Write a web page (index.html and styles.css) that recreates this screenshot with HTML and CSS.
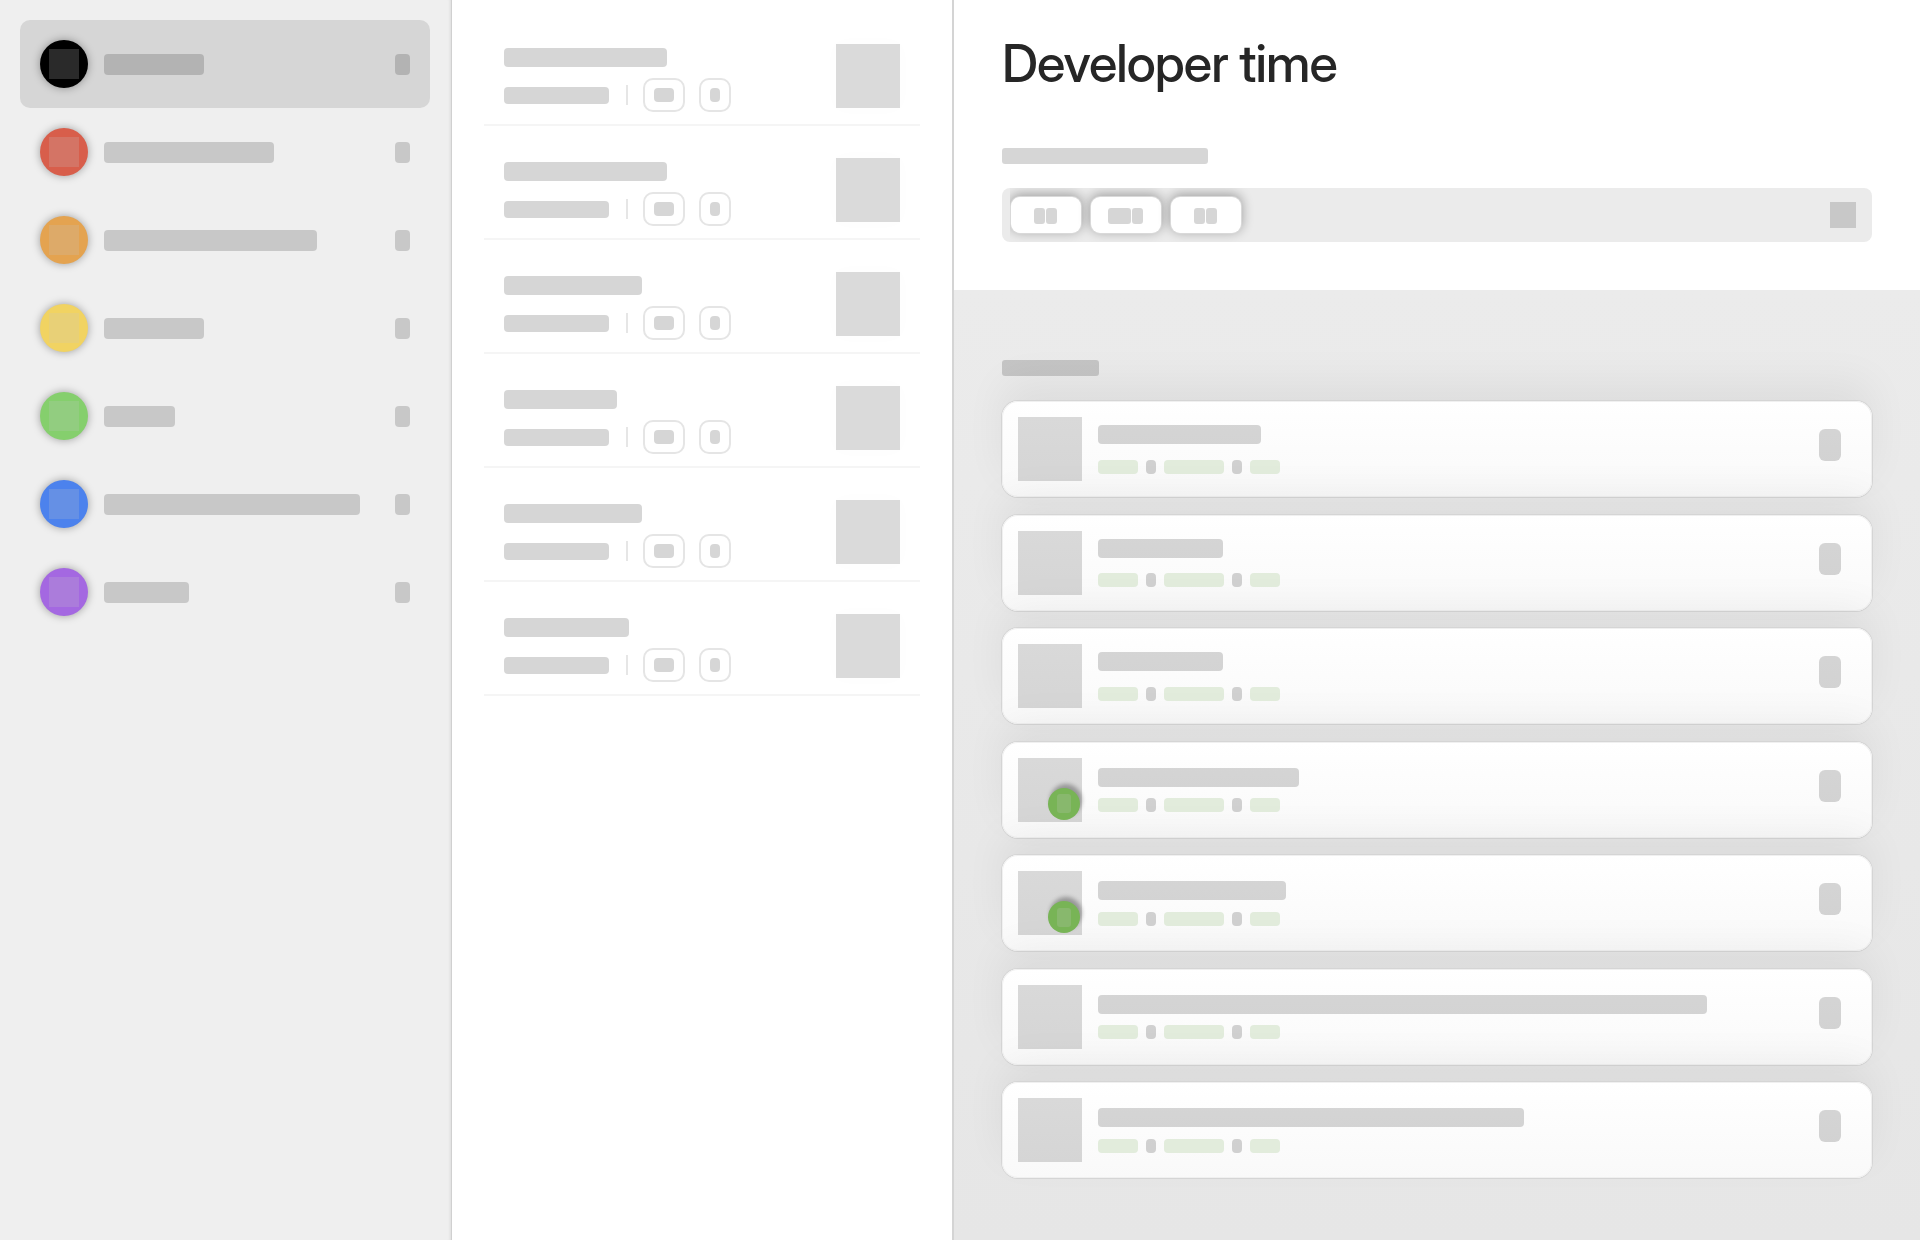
FILE: index.html
```
<!DOCTYPE html>
<html lang="en">
<head>
<meta charset="utf-8">
<title>Developer time</title>
<link rel="stylesheet" href="styles.css">
</head>
<body>
<div class="app">
  <nav class="sidebar">
    <div class="nav-item active"><span class="dot black"><i></i></span><span class="bar" style="width:100px"></span><span class="count"></span></div>
    <div class="nav-item"><span class="dot red"><i></i></span><span class="bar" style="width:170.4px"></span><span class="count"></span></div>
    <div class="nav-item"><span class="dot orange"><i></i></span><span class="bar" style="width:213.4px"></span><span class="count"></span></div>
    <div class="nav-item"><span class="dot yellow"><i></i></span><span class="bar" style="width:100px"></span><span class="count"></span></div>
    <div class="nav-item"><span class="dot green"><i></i></span><span class="bar" style="width:71.4px"></span><span class="count"></span></div>
    <div class="nav-item"><span class="dot blue"><i></i></span><span class="bar" style="width:256px"></span><span class="count"></span></div>
    <div class="nav-item"><span class="dot purple"><i></i></span><span class="bar" style="width:85.4px"></span><span class="count"></span></div>
  </nav>

  <section class="list">
    <div class="row"><div class="row-text"><span class="row-title" style="width:163.4px"></span><div class="meta"><span class="row-sub"></span><span class="rule"></span><span class="pill"><i></i></span><span class="pill small"><i></i></span></div></div><span class="thumb"></span></div>
    <div class="row"><div class="row-text"><span class="row-title" style="width:163.4px"></span><div class="meta"><span class="row-sub"></span><span class="rule"></span><span class="pill"><i></i></span><span class="pill small"><i></i></span></div></div><span class="thumb"></span></div>
    <div class="row"><div class="row-text"><span class="row-title" style="width:138px"></span><div class="meta"><span class="row-sub"></span><span class="rule"></span><span class="pill"><i></i></span><span class="pill small"><i></i></span></div></div><span class="thumb"></span></div>
    <div class="row"><div class="row-text"><span class="row-title" style="width:113px"></span><div class="meta"><span class="row-sub"></span><span class="rule"></span><span class="pill"><i></i></span><span class="pill small"><i></i></span></div></div><span class="thumb"></span></div>
    <div class="row"><div class="row-text"><span class="row-title" style="width:138px"></span><div class="meta"><span class="row-sub"></span><span class="rule"></span><span class="pill"><i></i></span><span class="pill small"><i></i></span></div></div><span class="thumb"></span></div>
    <div class="row"><div class="row-text"><span class="row-title" style="width:125.4px"></span><div class="meta"><span class="row-sub"></span><span class="rule"></span><span class="pill"><i></i></span><span class="pill small"><i></i></span></div></div><span class="thumb"></span></div>
  </section>

  <main class="detail">
    <header class="head">
      <h1>Developer time</h1>
      <span class="label wide"></span>
      <div class="field">
        <div class="chips">
          <span class="chip"><i></i><i></i></span>
          <span class="chip"><i class="long"></i><i></i></span>
          <span class="chip"><i></i><i></i></span>
        </div>
        <span class="field-icon"></span>
      </div>
    </header>
    <section class="body">
      <span class="label"></span>
      <div class="cards">
        <article class="card"><span class="avatar"></span><div class="card-text loose"><span class="card-title" style="width:163.4px"></span><div class="tags"><i class="tag t1"></i><i class="sep"></i><i class="tag t2"></i><i class="sep"></i><i class="tag t3"></i></div></div><span class="more"></span></article>
        <article class="card"><span class="avatar"></span><div class="card-text loose"><span class="card-title" style="width:125.4px"></span><div class="tags"><i class="tag t1"></i><i class="sep"></i><i class="tag t2"></i><i class="sep"></i><i class="tag t3"></i></div></div><span class="more"></span></article>
        <article class="card"><span class="avatar"></span><div class="card-text loose"><span class="card-title" style="width:125.4px"></span><div class="tags"><i class="tag t1"></i><i class="sep"></i><i class="tag t2"></i><i class="sep"></i><i class="tag t3"></i></div></div><span class="more"></span></article>
        <article class="card"><span class="avatar"><b class="status"><i></i></b></span><div class="card-text"><span class="card-title" style="width:201px"></span><div class="tags"><i class="tag t1"></i><i class="sep"></i><i class="tag t2"></i><i class="sep"></i><i class="tag t3"></i></div></div><span class="more"></span></article>
        <article class="card"><span class="avatar"><b class="status"><i></i></b></span><div class="card-text"><span class="card-title" style="width:188.4px"></span><div class="tags"><i class="tag t1"></i><i class="sep"></i><i class="tag t2"></i><i class="sep"></i><i class="tag t3"></i></div></div><span class="more"></span></article>
        <article class="card"><span class="avatar"></span><div class="card-text"><span class="card-title" style="width:609px"></span><div class="tags"><i class="tag t1"></i><i class="sep"></i><i class="tag t2"></i><i class="sep"></i><i class="tag t3"></i></div></div><span class="more"></span></article>
        <article class="card"><span class="avatar"></span><div class="card-text"><span class="card-title" style="width:426.4px"></span><div class="tags"><i class="tag t1"></i><i class="sep"></i><i class="tag t2"></i><i class="sep"></i><i class="tag t3"></i></div></div><span class="more"></span></article>
      </div>
    </section>
  </main>
</div>
</body>
</html>
```
FILE: styles.css
```
:root { --ink: rgba(0, 0, 0, .16); }
* { box-sizing: border-box; }
body { margin: 0; font-family: Inter, "Liberation Sans", sans-serif; background: #fff; }
i, b { display: block; }
.app { display: flex; width: 1920px; height: 1240px; overflow: hidden; }

/* sidebar */
.sidebar {
  flex: none; width: 452px; padding: 20px 21px 0 20px; background: #efefef;
  border-right: 1px solid #d0d0d0; box-shadow: inset -3px 0 3px -2px rgba(0, 0, 0, .08);
}
.nav-item { display: flex; align-items: center; height: 88px; padding: 0 20px; border-radius: 10px; }
.nav-item.active { background: #d6d6d6; }
.dot {
  display: flex; align-items: center; justify-content: center; flex: none;
  width: 48px; height: 48px; margin-right: 16px; border-radius: 50%;
  box-shadow: 0 0 8px rgba(0, 0, 0, .35);
}
.dot i { width: 30px; height: 30px; background: rgba(200, 200, 200, .21); }
.black { background: #000; }
.red { background: #d85e4b; }
.orange { background: #e4a350; }
.yellow { background: #f1d362; }
.green { background: #85cf6d; }
.blue { background: #4c82ed; }
.purple { background: #a468e1; }
.bar, .count { height: 21.5px; background: var(--ink); border-radius: 4px; margin-top: .5px; }
.count { width: 15px; margin-left: auto; }

/* list */
.list { flex: none; width: 502px; padding: 12px 32px 0; border-right: 2px solid #d4d4d4; }
.row {
  display: flex; justify-content: space-between; height: 114px;
  padding: 32px 20px 0; border-bottom: 2px solid #f5f5f5;
}
.row-title { display: block; height: 18.7px; margin-top: 4.3px; background: var(--ink); border-radius: 4px; }
.meta { display: flex; align-items: center; height: 34px; margin-top: 11px; }
.row-sub { width: 105.4px; height: 17px; margin: 1px 16.6px 0 0; background: var(--ink); border-radius: 4px; }
.rule { width: 2px; height: 20px; margin-right: 15px; background: #e6e6e6; }
.pill {
  display: flex; align-items: center; justify-content: center; width: 42px; height: 34px;
  margin-right: 14px; border: 2px solid #e5e5e5; border-radius: 10px;
}
.pill i { width: 20px; height: 14.5px; background: var(--ink); border-radius: 4px; }
.pill.small { width: 32px; margin-right: 0; }
.pill.small i { width: 10px; }
.thumb { width: 64px; height: 64px; background: #dadada; box-shadow: 0 0 16px rgba(0, 0, 0, .015); }

/* detail */
.detail { flex: 1; display: flex; flex-direction: column; }
.head { height: 290px; padding: 32px 48px 0; }
h1 {
  margin: 0 0 52px; font-family: "Inter Display", Inter, sans-serif; font-size: 52px; line-height: 64px;
  font-weight: 500; letter-spacing: -.95px; color: #262626; white-space: nowrap;
}
.label { display: block; width: 97.4px; height: 16px; background: var(--ink); border-radius: 3px; }
.label.wide { width: 206.4px; }
.field {
  display: flex; align-items: center; justify-content: space-between; height: 54px; margin-top: 24px;
  padding: 0 16px 0 8px; background: #ebebeb; border-radius: 8px; overflow: hidden;
}
.chips { display: flex; align-items: center; gap: 10px; height: 54px; width: 280px; padding-left: 1px; overflow: hidden; }
.chip {
  display: flex; align-items: center; justify-content: center; gap: 1px; flex: none; width: 70px; height: 36px;
  padding-right: 1px; background: #fff; border-radius: 9px;
  box-shadow: 0 0 0 1px #d9d9d9, 0 -2px 12px 1px rgba(0, 0, 0, .33);
}
.chip i { width: 11px; height: 16px; margin-top: 2px; background: var(--ink); border-radius: 3px; }
.chip .long { width: 23px; }
.field-icon { width: 26px; height: 26px; background: #c8c8c8; }
.body { flex: 1; padding: 70px 48px 0; background: linear-gradient(#ebebeb, #e6e6e6); }
.cards { display: flex; flex-direction: column; gap: 17.5px; margin-top: 25px; }
.card {
  display: flex; height: 96px; padding: 16px 31px 0 16px; border-radius: 16px;
  background: linear-gradient(#fff, #f9f9f9);
  box-shadow: 0 0 0 1px #d5d5d5, inset 0 0 0 1px #f0f0f0, 0 -20px 40px rgba(0, 0, 0, .055);
}
.avatar { position: relative; flex: none; width: 64px; height: 64px; background: rgba(0, 0, 0, .145); }
.status {
  position: absolute; right: 2px; bottom: 2px; display: flex; align-items: center; justify-content: center;
  width: 32px; height: 32px; border-radius: 50%; background: #78b456;
  box-shadow: 2px -4px 4px rgba(0, 0, 0, .3);
}
.status i { width: 13.5px; height: 19px; background: rgba(200, 200, 200, .21); border-radius: 3px; }
.card-text { margin-left: 16px; padding-top: 10px; }
.card-title { display: block; height: 19px; background: var(--ink); border-radius: 4px; }
.tags { display: flex; gap: 8px; margin-top: 11.5px; }
.loose { padding-top: 8px; }
.loose .tags { margin-top: 15.5px; }
.tag, .sep { height: 14.3px; border-radius: 4px; }
.tag { background: #e2ecdc; }
.sep { width: 10px; background: rgba(0, 0, 0, .17); }
.t1 { width: 40px; }
.t2 { width: 60px; }
.t3 { width: 30px; }
.more { width: 22px; height: 32px; margin: 12px 0 0 auto; background: var(--ink); border-radius: 6px; }
```
